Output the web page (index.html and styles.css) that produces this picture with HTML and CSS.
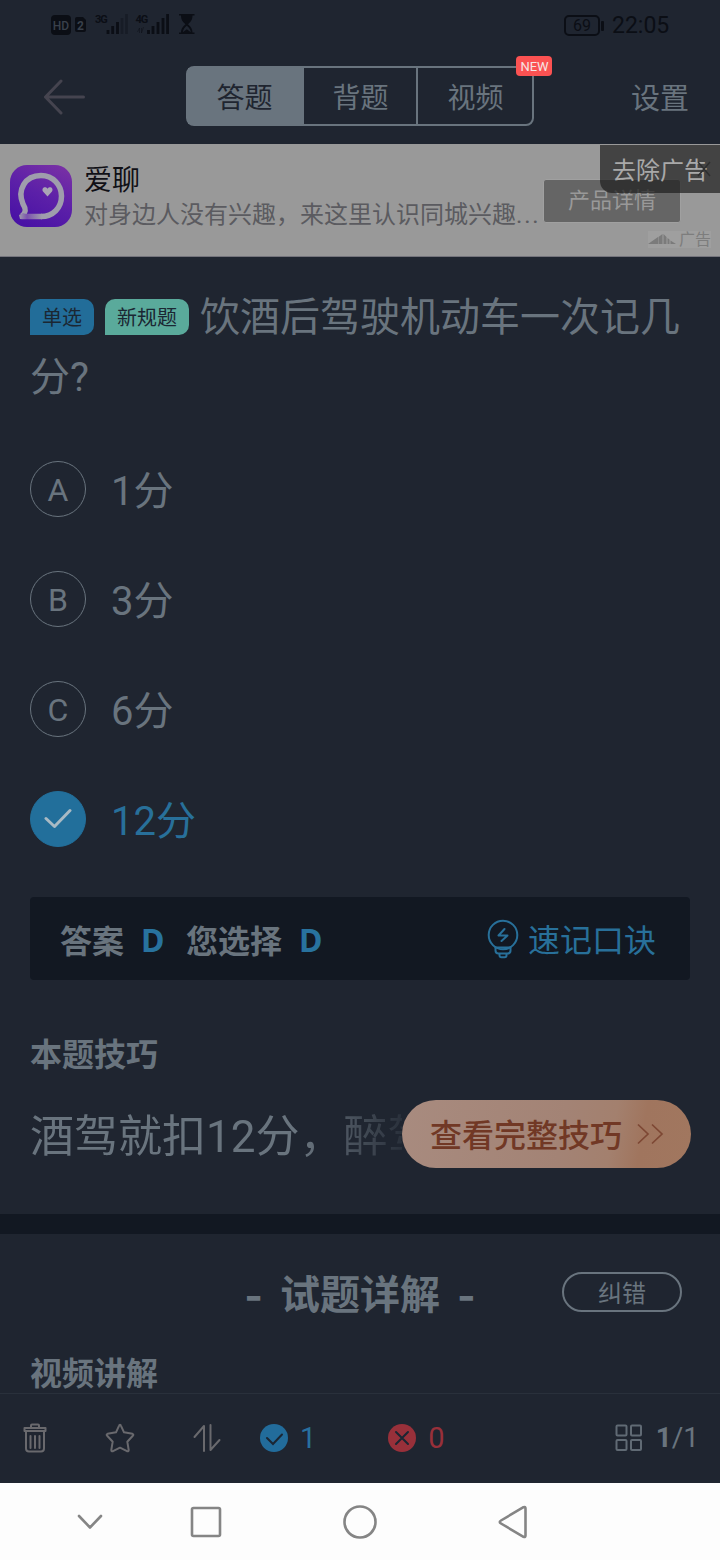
FILE: index.html
```html
<!DOCTYPE html>
<html lang="zh-CN">
<head>
<meta charset="utf-8">
<title>答题</title>
<link rel="stylesheet" href="styles.css">
</head>
<body>
<div class="screen">
  <header class="header">
    <div class="status">
      <svg class="status-icons" width="150" height="24" viewBox="50 12 150 24">
        <rect x="51" y="15" width="20" height="20" rx="4" fill="#0b0e15"/>
        <text x="61" y="29.5" class="hd">HD</text>
        <path d="M77 17h6l3 3v10a2 2 0 0 1-2 2h-7a2 2 0 0 1-2-2V19a2 2 0 0 1 2-2z" fill="#0b0e15"/>
        <text x="80.500" y="29.500" class="sim">2</text>
        <text x="95" y="23" class="net">3G</text>
        <text x="135.500" y="23" class="net">4G</text>
        <g stroke="#0b0e15" stroke-width="2.800">
          <path d="M108 34v-4M112.700 34v-8M117.500 34V22M148.500 34v-4M153 34v-8M158 34V22M163 34V18M167.600 34V14"/>
          <path d="M122 34V18M126.500 34V14" opacity=".35"/>
        </g>
        <path d="M137.500 32l2-4v5M143.500 27l-2 6v-5" stroke="#0b0e15" opacity=".5" fill="none"/>
        <path d="M179 14h15.500v1.500h-2c0 5-2.500 7-4.500 8.800 2 1.800 4.500 4 4.500 8.200h2V34H179v-1.500h2c0-4.200 2.500-6.400 4.500-8.200-2-1.800-4.500-3.800-4.500-8.800h-2z" fill="#0b0e15"/>
        <path d="M182.800 32.200c.3-3 2-4.700 4-6.400 2 1.700 3.700 3.400 4 6.400l-4-3z" fill="#1f2530"/>
      </svg>
      <div class="status-right">
        <span class="battery">69</span><span class="clock">22:05</span>
      </div>
    </div>
    <nav class="nav">
      <svg class="back" width="42" height="36" viewBox="0 0 42 36"><path d="M18 2L2.500 18L18 34M2.500 18H40.500" /></svg>
      <div class="tabs">
        <span class="tab active">答题</span><span class="tab">背题</span><span class="tab">视频</span>
        <b class="new">NEW</b>
      </div>
      <span class="settings">设置</span>
    </nav>
  </header>

  <section class="ad">
    <svg class="ad-logo" width="62" height="62" viewBox="0 0 62 62">
      <defs>
        <linearGradient id="lg" x1=".8" y1="0" x2=".3" y2="1"><stop offset="0" stop-color="#7830a5"/><stop offset=".5" stop-color="#5c20a8"/><stop offset="1" stop-color="#4912a5"/></linearGradient>
        <linearGradient id="tail" x1="0" y1="0" x2="1" y2="0"><stop offset="0" stop-color="#9f9dac"/><stop offset=".35" stop-color="#7a52ad"/><stop offset="1" stop-color="#9f9dac"/></linearGradient>
      </defs>
      <rect width="62" height="62" rx="17" fill="url(#lg)"/>
      <path d="M12 51C17 47 15.500 43 13 39C7 25 15 10.500 31 10.500C43 10.500 51.500 20 51.500 31C51.500 43 43 51.500 31 51.500" fill="none" stroke="#9f9dac" stroke-width="5.500"/>
      <path d="M9 50L13 48L15 48.700H32V54.300H12L10 54z" fill="url(#tail)"/>
      <path d="M37.500 31.500l-4.500-5c-2-3 2-6 4.500-2.800 2.500-3.200 6.500-.2 4.500 2.800z" fill="#aaa5b5"/>
    </svg>
    <div class="ad-copy">
      <div class="ad-title">爱聊</div>
      <div class="ad-desc">对身边人没有兴趣，来这里认识同城兴趣<span class="dots">...</span></div>
    </div>
    <span class="ad-cta">产品详情</span>
    <span class="ad-mark"><svg width="28" height="13" viewBox="0 0 28 13"><path d="M0 11L10 4v7zM10.500 4l4-3v10h-4zM15.500 1l3 3v7h-3zM19.500 5l2 1.500V11h-2zM22.500 7.500L28 11h-5.500z" fill="#7b7b7b"/></svg>广告</span>
    <span class="ad-remove">去除广告<svg class="close" width="14" height="16" viewBox="0 0 14 16"><path d="M1 1l12 14M13 1L1 15"/></svg></span>
  </section>

  <main class="content">
    <h1 class="question"><span class="tag blue">单选</span><span class="tag green">新规题</span>饮酒后驾驶机动车一次记几分?</h1>
    <ul class="options">
      <li><span class="mark">A</span><span class="opt">1分</span></li>
      <li><span class="mark">B</span><span class="opt">3分</span></li>
      <li><span class="mark">C</span><span class="opt">6分</span></li>
      <li class="right"><span class="mark"><svg width="28" height="22" viewBox="0 0 28 22"><path d="M2 10.500L10.500 18.500L26 2.500"/></svg></span><span class="opt">12分</span></li>
    </ul>
    <div class="answer">
      <span>答案</span><b class="d1">D</b><span>您选择</span><b class="d2">D</b>
      <span class="memo">
        <svg width="32" height="40" viewBox="0 0 32 40"><g><circle cx="16" cy="16" r="14.300"/><path d="M8.500 28v3.500a3 3 0 0 0 3 3h9a3 3 0 0 0 3-3V28M8.500 28.500h15M12.500 35v1.500a1.800 1.800 0 0 0 1.800 1.800h3.400a1.800 1.800 0 0 0 1.800-1.800V35M17.500 10l-6 6.500h9l-6 5.500"/></g></svg><span class="memo-text">速记口诀</span>
      </span>
    </div>
    <h2 class="sub">本题技巧</h2>
    <div class="tip">
      <p class="tip-text">酒驾就扣12分，醉驾</p>
      <span class="more"><span class="more-text">查看完整技巧</span><svg width="28" height="22" viewBox="0 0 28 22"><path d="M2 1.500l10 9.500-10 9.500" opacity=".55"/><path d="M16 1.500l10 9.500-10 9.500"/></svg></span>
    </div>
  </main>

  <section class="detail">
    <div class="detail-head"><h2><span class="dash">-</span>试题详解<span class="dash">-</span></h2><span class="fix">纠错</span></div>
    <h2 class="sub video">视频讲解</h2>
  </section>

  <footer class="toolbar">
    <svg class="trash" width="24" height="30" viewBox="0 0 24 30"><path d="M1.500 5h21v3h-21zM8 5V2.500A1 1 0 0 1 9 1.500h6a1 1 0 0 1 1 1V5M3 8v17.500a3 3 0 0 0 3 3h12a3 3 0 0 0 3-3V8M7.500 13v12M12 13v12M16.500 13v12"/></svg>
    <svg class="star" width="30" height="30" viewBox="0 0 30 30"><path d="M15 1.800Q15.700 1.800 16 2.800L19 9.300L27.500 10.800Q29 11.500 27.800 12.800L22.300 18.700L23.700 27Q23.700 28.700 22 28.200L15 24.700L8 28.200Q6.300 28.700 6.300 27L7.700 18.700L2.200 12.800Q1 11.500 2.500 10.800L11 9.300L14 2.800Q14.300 1.800 15 1.800z"/></svg>
    <svg class="sort" width="28" height="28" viewBox="0 0 28 28"><path d="M1.500 13L11 2v25M17.500 1v25L26.500 16"/></svg>
    <span class="count ok"><svg width="28" height="28" viewBox="0 0 28 28"><circle cx="14" cy="14" r="14"/><path d="M7 14l6 6 9-9.500"/></svg>1</span>
    <span class="count bad"><svg width="28" height="28" viewBox="0 0 28 28"><circle cx="14" cy="14" r="14"/><path d="M8 8l12 12M20 8L8 20"/></svg>0</span>
    <span class="page"><svg width="28" height="28" viewBox="0 0 28 28"><rect x="1.500" y="1.500" width="10" height="10" rx="1"/><rect x="16" y="1.500" width="10" height="10" rx="1"/><rect x="1.500" y="16" width="10" height="10" rx="1"/><rect x="16" y="16" width="10" height="10" rx="1"/></svg><b>1</b>/1</span>
  </footer>

  <nav class="sysnav">
    <svg width="26" height="16" viewBox="0 0 26 16"><path d="M2 2l11 11.500L24 2"/></svg>
    <svg class="recent" width="32" height="32" viewBox="0 0 32 32"><rect x="2" y="2" width="28" height="28" rx="1.500"/></svg>
    <svg class="home" width="34" height="34" viewBox="0 0 34 34"><circle cx="17" cy="17" r="15.500"/></svg>
    <svg class="prev" width="30" height="34" viewBox="0 0 30 34"><path d="M3 15.500L25.500 2.200Q27.500 1.500 27.500 3.500v27Q27.500 32.500 25.500 31.800L3 18.500Q.5 17 3 15.500z"/></svg>
  </nav>
</div>
</body>
</html>
```
FILE: styles.css
```css
* { box-sizing: border-box; }
body { margin: 0; background: #1f2530; font-family: Roboto, "Noto Sans CJK SC", sans-serif; color: #69747e; }
h1, h2, p, ul { margin: 0; padding: 0; }
svg { display: block; flex: none; }
.screen { width: 720px; height: 1560px; overflow: hidden; display: flex; flex-direction: column; }

.header { height: 144px; flex: none; }
.status { height: 50px; padding: 0 51px 0 50px; display: flex; justify-content: space-between; align-items: center; }
.status-icons { margin-top: -2px; }
.hd { font: 500 12px Roboto, sans-serif; fill: #39404b; text-anchor: middle; }
.sim { font: 700 12px Roboto, sans-serif; fill: #39404b; text-anchor: middle; }
.net { font: 700 11px Roboto, sans-serif; fill: #0b0e15; letter-spacing: -1px; }
.status-right { display: flex; align-items: center; color: #0b0e15; font-size: 24px; }
.battery { position: relative; width: 36px; height: 21px; border: 2px solid #0b0e15; border-radius: 5px; font-size: 16px; line-height: 17px; text-align: center; font-weight: 400; }
.battery::after { content: ""; position: absolute; right: -6px; top: 4px; width: 3px; height: 10px; border-radius: 1px; background: #0b0e15; }
.clock { width: 57px; margin-left: 12px; font-size: 23px; white-space: nowrap; }
.nav { height: 94px; padding: 0 31px 0 43px; display: flex; align-items: center; justify-content: space-between; }
.back path { fill: none; stroke: #45444f; stroke-width: 3; stroke-linecap: round; stroke-linejoin: round; }
.tabs { position: relative; width: 348px; height: 60px; margin-top: -2px; margin-left: 5px; border: 2px solid #69747e; border-radius: 8px; display: grid; grid-template-columns: 114px 114px 116px; font-size: 28px; }
.tab { display: flex; align-items: center; justify-content: center; }
.tab + .tab { border-left: 2px solid #69747e; }
.tab.active { background: #69747e; color: #1f2530; padding-right: 2px; }
.new { position: absolute; right: -20px; top: -12px; width: 36px; height: 20px; border-radius: 4px; background: #fb5252; color: #f7e4e4; font: 400 13px/21px Roboto, sans-serif; text-align: center; }
.settings { font-size: 29px; line-height: 40px; padding-top: 3px; }

.ad { position: relative; height: 113px; flex: none; background: #999; border-bottom: 1px solid #74747c; padding: 21px 0 0 10px; display: flex; }
.ad-copy { margin-left: 12px; padding-top: 2px; }
.ad-title { font-size: 28px; line-height: 28px; color: #101016; }
.ad-desc { margin-top: 6px; font-size: 24px; line-height: 28px; color: #5b5b60; white-space: nowrap; }
.dots { letter-spacing: 1.8px; }
.ad-cta { position: absolute; left: 543px; top: 35px; width: 138px; height: 44px; background: #656565; border: 1px solid #a0a0a0; border-radius: 3px; color: #999; font-size: 22px; line-height: 42px; text-align: center; }
.ad-mark { position: absolute; right: 9px; bottom: 8px; height: 17px; display: flex; align-items: center; gap: 3px; font-size: 16px; line-height: 17px; color: #7d7d7d; background: #9f9f9f; }
.ad-remove { position: absolute; right: 0; top: 1px; width: 120px; height: 48px; background: rgba(30,30,30,.7); border-radius: 0 0 0 12px; color: #a9a9a9; font-size: 24px; line-height: 52px; padding-left: 12px; white-space: nowrap; }
.close { position: absolute; right: 9px; top: 16px; }
.close path { stroke: #2f2f2f; stroke-width: 1.5; }

.content { height: 957px; flex: none; padding: 31px 30px 0; }
.question { height: 149px; font-size: 40px; font-weight: 400; line-height: 60px; }
.tag { display: inline-block; vertical-align: 6px; height: 36px; border-radius: 10px 10px 10px 0; font-size: 20px; line-height: 39px; color: #1b2733; text-align: center; margin-right: 11px; }
.blue { width: 64px; background: #226d99; }
.green { width: 84px; background: #5aaa9b; }
.options { list-style: none; }
.options li { height: 110px; padding-top: 24px; display: flex; align-items: flex-start; }
.mark { width: 56px; height: 56px; border: 1px solid #69747e; border-radius: 50%; display: flex; align-items: center; justify-content: center; font-size: 32px; padding-top: 2px; }
.opt { margin-left: 25px; font-size: 40px; line-height: 60px; padding-top: 1px; }
.right .mark { background: #226f9b; border-color: #226f9b; padding: 0; }
.right .opt { color: #28709a; }
.mark path { fill: none; stroke: #a9bac4; stroke-width: 3; stroke-linecap: round; stroke-linejoin: round; }
.answer { height: 83px; margin-top: 20px; padding: 0 34px 0 30px; background: #121822; border-radius: 4px; display: flex; align-items: center; font-size: 32px; font-weight: 700; }
.answer b { color: #28729e; width: 22px; font-family: "Noto Sans", sans-serif; font-weight: 700; padding-top: 1px; }
.answer .d1 { margin: 0 23px 0 17px; }
.answer .d2 { margin-left: 17px; }
.memo { margin-left: auto; display: flex; align-items: center; gap: 9px; color: #28709a; font-weight: 400; }
.memo-text { margin-top: -2px; }
.memo g { fill: none; stroke: #28709a; stroke-width: 2; stroke-linejoin: round; stroke-linecap: round; }
.sub { margin-top: 53px; font-size: 32px; line-height: 44px; font-weight: 700; }
.tip { margin-top: 23px; height: 68px; margin-right: -2px; display: flex; }
.tip-text { width: 372px; flex: none; overflow: hidden; white-space: nowrap; font-size: 44px; line-height: 75px; -webkit-mask-image: linear-gradient(90deg, #000 270px, transparent 390px); mask-image: linear-gradient(90deg, #000 270px, transparent 390px); }
.more { width: 289px; height: 68px; border-radius: 34px; background: linear-gradient(100deg, #a88b7f 0, #a38375 55%, #a3806e 72%, #a0755e 82%, #a1775f 100%); color: #713825; font-size: 32px; font-weight: 500; padding-left: 28px; display: flex; align-items: center; white-space: nowrap; flex: none; gap: 14px; }
.more-text { padding-bottom: 2px; }
.more path { fill: none; stroke: #713825; stroke-width: 1.7; opacity: .75; }

.detail { height: 179px; flex: none; border-top: 20px solid #121822; overflow: hidden; }
.detail-head { position: relative; height: 118px; display: flex; align-items: center; justify-content: center; }
.detail-head h2 { font-size: 40px; line-height: 60px; padding-top: 6px; display: flex; gap: 17px; }
.dash { font-family: Inter, sans-serif; }
.fix { position: absolute; right: 38px; top: 38px; width: 120px; height: 40px; border: 2px solid #69747e; border-radius: 20px; text-align: center; font-size: 24px; line-height: 40px; }
.video { margin: 0 30px; }

.toolbar { height: 90px; flex: none; border-top: 1px solid #29303b; padding: 0 21px 2px 23px; display: flex; align-items: center; }
.toolbar > svg path { fill: none; stroke: #69696d; stroke-width: 2; stroke-linejoin: round; stroke-linecap: round; }
.star { margin-left: 58px; }
.sort { margin-left: 58px; }
.count { display: flex; align-items: center; gap: 12px; font-size: 29px; }
.count path { fill: none; stroke: #1b2633; stroke-width: 2; stroke-linecap: round; }
.ok { margin-left: 39px; color: #28709f; }
.ok circle { fill: #226c9b; }
.bad { margin-left: 72px; color: #98303a; }
.bad circle { fill: #98303a; }
.page { margin-left: auto; display: flex; align-items: center; font-size: 28px; }
.page svg { margin-right: 13px; }
.page rect { fill: none; stroke: #606a74; stroke-width: 2; }

.sysnav { height: 77px; flex: none; background: #fdfdfd; padding: 0 0 0 77px; display: flex; align-items: center; }
.recent { margin-left: 87px; }
.home { margin-left: 121px; }
.prev { margin-left: 121px; }
.sysnav path, .sysnav rect, .sysnav circle { fill: none; stroke: #858585; stroke-width: 2.6; stroke-linecap: round; stroke-linejoin: round; }
```
